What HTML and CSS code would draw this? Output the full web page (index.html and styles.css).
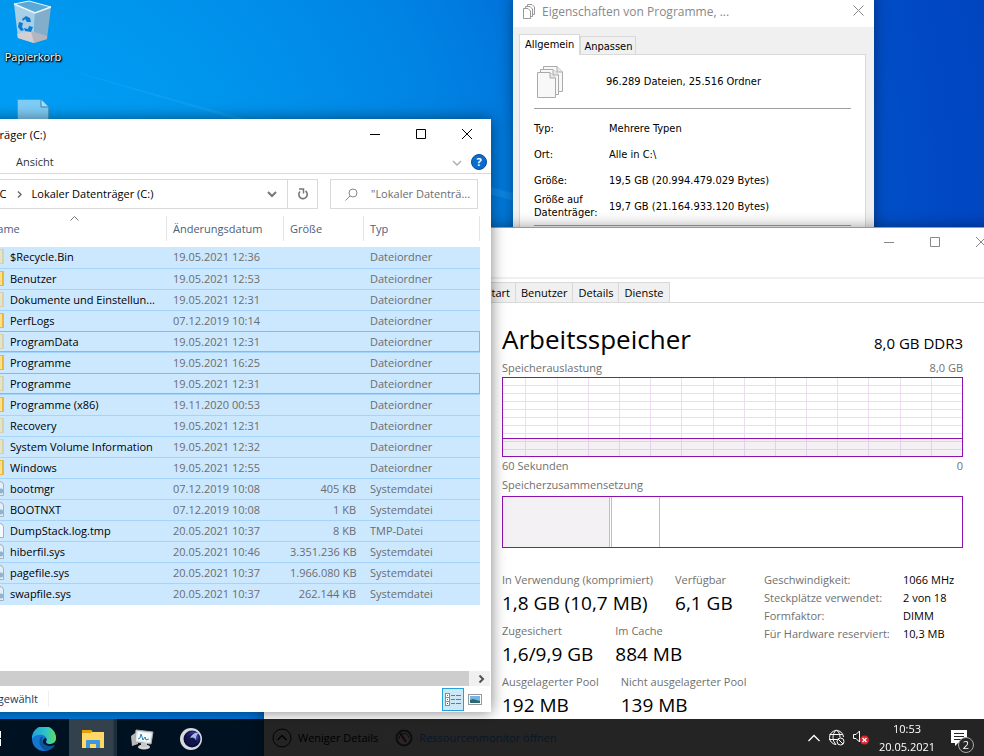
FILE: index.html
```html
<!DOCTYPE html>
<html lang="de">
<head>
  <meta charset="UTF-8" />
  <meta name="viewport" content="width=device-width, initial-scale=1.0" />
  <title>Desktop</title>
  <link rel="stylesheet" href="styles.css">
</head>
<body>

  <main class="desktop">
    <svg class="beam" viewBox="0 0 520 260" aria-hidden="true">
      <path d="M40 62 L520 195 L520 203 Z" fill="#3db8ff" opacity="0.2"/>
    </svg>

    <div class="desktop-icons">
      <a class="desktop-icon" href="#">
        <svg width="40" height="44" viewBox="0 0 40 44" aria-hidden="true">
          <path d="M1 4 L16 1 L38 7 L22 13 Z" fill="#5aa9d6" stroke="#e6f3fa" stroke-width="1"/>
          <path d="M1 4 L22 13 L21 43 L5 38 Z" fill="#a9cfe6"/>
          <path d="M22 13 L38 7 L34 39 L21 43 Z" fill="#83aecb"/>
          <path d="M4 34 L18 31 L21 43 L5 38 Z" fill="#d3cfd2"/>
          <path d="M18 31 L34 36 L34 39 L21 43 Z" fill="#b4b5be"/>
          <path d="M1 4 L22 13 L38 7" fill="none" stroke="#e6f3fa" stroke-width="1.4"/>
          <path d="M9 19 l4 -3 l4 2 l1 4 l-4 0 l-2 -3 l-2 2 z M6 22 l4 1 l-1 4 l2 3 l-3 1 l-3 -4 z M11 28 l4 1 l1 -3 l4 1 l-2 5 l-6 -1 z" fill="#0b7bd3"/>
        </svg>
        <span>Papierkorb</span>
      </a>
      <a class="desktop-icon" href="#" aria-label="Datei">
        <svg width="32" height="40" viewBox="0 0 32 40" aria-hidden="true">
          <path d="M0.500 0.500 H24 L31.500 8 V40 H0.500 Z" fill="#7fcdf7" stroke="#4a9fcc"/>
          <path d="M24 0.500 V8 H31.500" fill="#a9dffb" stroke="#2f87b8"/>
        </svg>
      </a>
    </div>

    <!-- Eigenschaften -->
    <section class="window props">
      <header class="props-title">
        <svg width="12" height="15" viewBox="0 0 12 15" fill="#fff" stroke="#999" aria-hidden="true">
          <path d="M4.500 0.500 H9 L11.500 3 V10.500 H4.500 Z"/>
          <path d="M2.500 2.500 H7 L9.500 5 V12.500 H2.500 Z"/>
          <path d="M0.500 4.500 H5 L7.500 7 V14.500 H0.500 Z"/>
        </svg>
        <h2>Eigenschaften von Programme, ...</h2>
        <button aria-label="Schließen">
          <svg width="11" height="11" viewBox="0 0 11 11" aria-hidden="true"><path d="M0.500 0.500 L10.500 10.500 M10.500 0.500 L0.500 10.500" stroke="#888"/></svg>
        </button>
      </header>
      <nav class="props-tabs">
        <button class="active">Allgemein</button>
        <button>Anpassen</button>
      </nav>
      <div class="props-page">
        <div class="props-summary">
          <svg width="28" height="34" viewBox="0 0 28 34" fill="#f8f8f8" stroke="#aaa" aria-hidden="true">
            <path d="M7.500 1.500 H21 L26.500 7 V26.500 H7.500 Z"/>
            <path d="M21 1.500 V7 H26.500" fill="#e8e8e8"/>
            <path d="M4.500 4.500 H17 L22.500 10 V29.500 H4.500 Z"/>
            <path d="M17 4.500 V10 H22.500" fill="#e8e8e8"/>
            <path d="M1.500 7.500 H14 L19.500 13 V32.500 H1.500 Z"/>
            <path d="M14 7.500 V13 H19.500" fill="#e8e8e8"/>
          </svg>
          <span>96.289 Dateien, 25.516 Ordner</span>
        </div>
        <dl class="props-list">
          <dt>Typ:</dt><dd>Mehrere Typen</dd>
          <dt>Ort:</dt><dd>Alle in C:\</dd>
          <dt>Größe:</dt><dd>19,5 GB (20.994.479.029 Bytes)</dd>
          <dt>Größe auf Datenträger:</dt><dd>19,7 GB (21.164.933.120 Bytes)</dd>
        </dl>
      </div>
    </section>

    <!-- Task-Manager -->
    <section class="window taskmgr">
      <header class="window-buttons">
        <button aria-label="Minimieren"><svg width="10" height="10" viewBox="0 0 10 10" aria-hidden="true"><path d="M0 5.500 H10" stroke="#888"/></svg></button>
        <button aria-label="Maximieren"><svg width="10" height="10" viewBox="0 0 10 10" aria-hidden="true"><path d="M0.500 0.500 H9.500 V9.500 H0.500 Z" fill="none" stroke="#888"/></svg></button>
        <button aria-label="Schließen"><svg width="10" height="10" viewBox="0 0 10 10" aria-hidden="true"><path d="M0 0 L10 10 M10 0 L0 10" stroke="#888"/></svg></button>
      </header>
      <nav class="tm-tabs">
        <button>Autostart</button>
        <button>Benutzer</button>
        <button>Details</button>
        <button>Dienste</button>
      </nav>
      <div class="tm-content">
        <div class="tm-heading">
          <h1>Arbeitsspeicher</h1>
          <span>8,0 GB DDR3</span>
        </div>
        <div class="tm-caption"><span>Speicherauslastung</span><span>8,0 GB</span></div>
        <svg class="tm-chart" viewBox="0 0 461 80" preserveAspectRatio="none" shape-rendering="crispEdges" role="img" aria-label="Speicherauslastung">
          <rect x="0" y="61" width="461" height="19" fill="#f3f1f4"/>
          <path d="M0 8.500 H461 M0 16.500 H461 M0 24.500 H461 M0 32.500 H461 M0 40.500 H461 M0 48.500 H461 M0 56.500 H461 M0 64.500 H461 M0 72.500 H461
                   M23.500 0 V80 M55.500 0 V80 M86.500 0 V80 M117.500 0 V80 M148.500 0 V80 M179.500 0 V80 M211.500 0 V80 M242.500 0 V80 M273.500 0 V80 M304.500 0 V80 M335.500 0 V80 M366.500 0 V80 M398.500 0 V80 M429.500 0 V80" stroke="#8b12ae" stroke-opacity="0.15" fill="none"/>
          <rect x="0" y="61" width="461" height="1" fill="#8b12ae"/>
          <rect x="0.500" y="0.500" width="460" height="79" fill="none" stroke="#8b12ae"/>
        </svg>
        <div class="tm-caption"><span>60 Sekunden</span><span>0</span></div>
        <div class="tm-caption">Speicherzusammensetzung</div>
        <div class="tm-composition">
          <div class="used"></div>
          <div class="modified"></div>
          <div class="standby"></div>
        </div>
        <div class="tm-stats">
          <div class="tm-numbers">
            <dl>
              <div><dt>In Verwendung (komprimiert)</dt><dd>1,8 GB (10,7 MB)</dd></div>
              <div><dt>Verfügbar</dt><dd>6,1 GB</dd></div>
            </dl>
            <dl>
              <div><dt>Zugesichert</dt><dd>1,6/9,9 GB</dd></div>
              <div><dt>Im Cache</dt><dd>884 MB</dd></div>
            </dl>
            <dl>
              <div><dt>Ausgelagerter Pool</dt><dd>192 MB</dd></div>
              <div><dt>Nicht ausgelagerter Pool</dt><dd>139 MB</dd></div>
            </dl>
          </div>
          <dl class="tm-hardware">
            <dt>Geschwindigkeit:</dt><dd>1066 MHz</dd>
            <dt>Steckplätze verwendet:</dt><dd>2 von 18</dd>
            <dt>Formfaktor:</dt><dd>DIMM</dd>
            <dt>Für Hardware reserviert:</dt><dd>10,3 MB</dd>
          </dl>
        </div>
      </div>
      <footer class="tm-footer">
        <button>
          <svg width="20" height="20" viewBox="0 0 20 20" fill="none" stroke="#111" aria-hidden="true"><circle cx="10" cy="10" r="9"/><path d="M5.500 12 L10 7.500 L14.500 12" stroke-width="1.500"/></svg>
          Weniger Details
        </button>
        <a href="#">
          <svg width="18" height="18" viewBox="0 0 18 18" aria-hidden="true"><circle cx="9" cy="9" r="7.500" fill="#fff" stroke="#555" stroke-width="2"/><path d="M5 4 L11 13" stroke="#f00" stroke-width="2"/><path d="M4 10 A5 5 0 0 1 14 9" fill="none" stroke="#444"/></svg>
          Ressourcenmonitor öffnen
        </a>
      </footer>
    </section>

    <!-- Explorer -->
    <section class="window explorer">
      <header class="ex-title">
        <h2>Datenträger (C:)</h2>
        <div class="window-buttons">
          <button aria-label="Minimieren"><svg width="10" height="10" viewBox="0 0 10 10" aria-hidden="true"><path d="M0 5.500 H10" stroke="#000"/></svg></button>
          <button aria-label="Maximieren"><svg width="10" height="10" viewBox="0 0 10 10" aria-hidden="true"><path d="M0.500 0.500 H9.500 V9.500 H0.500 Z" fill="none" stroke="#000"/></svg></button>
          <button aria-label="Schließen"><svg width="10" height="10" viewBox="0 0 10 10" aria-hidden="true"><path d="M0 0 L10 10 M10 0 L0 10" stroke="#000"/></svg></button>
        </div>
      </header>
      <div class="ex-ribbon">
        <button class="ribbon-tab">Ansicht</button>
        <button aria-label="Menüband erweitern"><svg width="10" height="6" viewBox="0 0 10 6" aria-hidden="true"><path d="M1 1 L5 5 L9 1" fill="none" stroke="#aaa" stroke-width="1.300"/></svg></button>
        <button class="help" aria-label="Hilfe">?</button>
      </div>
      <div class="ex-nav">
        <div class="address">
          <a href="#">PC</a>
          <svg width="5" height="7" viewBox="0 0 5 7" aria-hidden="true"><path d="M1 0.500 L4 3.500 L1 6.500" fill="none" stroke="#666" stroke-width="1.400"/></svg>
          <a href="#" class="current">Lokaler Datenträger (C:)</a>
          <button aria-label="Verlauf"><svg width="10" height="7" viewBox="0 0 10 7" aria-hidden="true"><path d="M1 1 L5 5 L9 1" fill="none" stroke="#777" stroke-width="2"/></svg></button>
          <button class="refresh" aria-label="Aktualisieren"><svg width="12" height="12" viewBox="0 0 12 12" aria-hidden="true"><path d="M8.500 3 A4.200 4.200 0 1 1 3 3.500" fill="none" stroke="#777" stroke-width="1.600"/><path d="M2 1 H6.500 V5.500" fill="none" stroke="#777" stroke-width="1.500"/></svg></button>
        </div>
        <label class="search">
          <svg width="13" height="13" viewBox="0 0 13 13" fill="none" stroke="#888" aria-hidden="true"><circle cx="8" cy="5" r="4"/><path d="M5 8 L0.500 12.500"/></svg>
          <input type="text" aria-label="Suchen" placeholder="&quot;Lokaler Datenträ...">
        </label>
      </div>
      <div class="ex-files">
        <table>
          <thead>
            <tr>
              <th class="name"><svg width="9" height="5" viewBox="0 0 9 5" aria-hidden="true"><path d="M0.500 4.500 L4.500 0.500 L8.500 4.500" fill="none" stroke="#777"/></svg>Name</th>
              <th class="date">Änderungsdatum</th>
              <th class="size">Größe</th>
              <th class="type">Typ</th>
            </tr>
          </thead>
          <tbody>
            <tr><td><i class="folder hidden"></i>$Recycle.Bin</td><td>19.05.2021 12:36</td><td></td><td>Dateiordner</td></tr>
            <tr><td><i class="folder"></i>Benutzer</td><td>19.05.2021 12:53</td><td></td><td>Dateiordner</td></tr>
            <tr><td><i class="folder hidden"></i>Dokumente und Einstellun...</td><td>19.05.2021 12:31</td><td></td><td>Dateiordner</td></tr>
            <tr><td><i class="folder"></i>PerfLogs</td><td>07.12.2019 10:14</td><td></td><td>Dateiordner</td></tr>
            <tr class="focus"><td><i class="folder hidden"></i>ProgramData</td><td>19.05.2021 12:31</td><td></td><td>Dateiordner</td></tr>
            <tr><td><i class="folder"></i>Programme</td><td>19.05.2021 16:25</td><td></td><td>Dateiordner</td></tr>
            <tr class="focus"><td><i class="folder hidden"></i>Programme</td><td>19.05.2021 12:31</td><td></td><td>Dateiordner</td></tr>
            <tr><td><i class="folder"></i>Programme (x86)</td><td>19.11.2020 00:53</td><td></td><td>Dateiordner</td></tr>
            <tr><td><i class="folder hidden"></i>Recovery</td><td>19.05.2021 12:31</td><td></td><td>Dateiordner</td></tr>
            <tr><td><i class="folder hidden"></i>System Volume Information</td><td>19.05.2021 12:32</td><td></td><td>Dateiordner</td></tr>
            <tr><td><i class="folder"></i>Windows</td><td>19.05.2021 12:55</td><td></td><td>Dateiordner</td></tr>
            <tr><td><i class="file sys"></i>bootmgr</td><td>07.12.2019 10:08</td><td>405 KB</td><td>Systemdatei</td></tr>
            <tr><td><i class="file sys"></i>BOOTNXT</td><td>07.12.2019 10:08</td><td>1 KB</td><td>Systemdatei</td></tr>
            <tr><td><i class="file"></i>DumpStack.log.tmp</td><td>20.05.2021 10:37</td><td>8 KB</td><td>TMP-Datei</td></tr>
            <tr><td><i class="file sys"></i>hiberfil.sys</td><td>20.05.2021 10:46</td><td>3.351.236 KB</td><td>Systemdatei</td></tr>
            <tr><td><i class="file sys"></i>pagefile.sys</td><td>20.05.2021 10:37</td><td>1.966.080 KB</td><td>Systemdatei</td></tr>
            <tr><td><i class="file sys"></i>swapfile.sys</td><td>20.05.2021 10:37</td><td>262.144 KB</td><td>Systemdatei</td></tr>
          </tbody>
        </table>
      </div>
      <div class="ex-scroll">
        <div class="thumb"></div>
        <button aria-label="Nach rechts"><svg width="7" height="8" viewBox="0 0 7 8" aria-hidden="true"><path d="M1.500 0.500 L5 4 L1.500 7.500" fill="none" stroke="#505050" stroke-width="2"/></svg></button>
      </div>
      <footer class="ex-status">
        <span>ausgewählt</span>
        <button class="view active" aria-label="Details">
          <svg width="16" height="13" viewBox="0 0 16 13" shape-rendering="crispEdges" aria-hidden="true">
            <path d="M0.500 0.500 H4.500 V12.500 H0.500 Z M0 4.500 H5 M0 8.500 H5" fill="#fff" stroke="#8c8c8c"/>
            <path d="M6 2.500 H10 M11 2.500 H16 M6 6.500 H10 M11 6.500 H16 M6 10.500 H10 M11 10.500 H16" stroke="#777"/>
            <path d="M2 2.500 H3" stroke="#2670d0"/><path d="M2 6.500 H3" stroke="#2670d0"/><path d="M2 10.500 H3" stroke="#e01010"/>
          </svg>
        </button>
        <button class="view" aria-label="Große Symbole">
          <svg width="14" height="11" viewBox="0 0 14 11" aria-hidden="true"><rect x="0.500" y="0.500" width="13" height="10" fill="#fff" stroke="#999"/><rect x="2" y="2" width="10" height="7" fill="#78b4ec"/><path d="M2 6 L5 5 L12 7 V9 H2 Z" fill="#2b6a72"/></svg>
        </button>
      </footer>
    </section>
  </main>

  <nav class="taskbar">
    <button class="start" aria-label="Start"></button>
    <button class="app" aria-label="Microsoft Edge">
      <svg width="24" height="24" viewBox="0 0 24 24" aria-hidden="true">
        <defs>
          <linearGradient id="edgeTop" x1="0" x2="1"><stop offset="0" stop-color="#1ba0e0"/><stop offset="0.600" stop-color="#2fc6c4"/><stop offset="1" stop-color="#62dc5c"/></linearGradient>
        </defs>
        <circle cx="12" cy="12" r="12" fill="#1477cf"/>
        <path d="M0 11 A12 12 0 0 1 24 11 C24 15.500 21 17 18 17 C15 17 14 16 14 15 C15.500 13.500 15 9 10.500 8 C6 7 1.500 9 0 12 Z" fill="url(#edgeTop)"/>
        <path d="M9 10 C6 13 7 20 13 23.500 C18 24 22 20.500 23 17.500 C19 20 12 19 10.500 15 C10 13 10 11.500 11 10 Z" fill="#0d549f"/>
        <path d="M14 11 C15 13 14 14.500 14 15 C14 16.500 16 17.500 19 17 C22 16.500 24 14 24 13 L25 18 L22.500 18 C18 20 12 18.500 11 15.500 C10.500 13 12 11 14 11 Z" fill="#001621"/>
      </svg>
    </button>
    <button class="app active" aria-label="Explorer">
      <svg width="22" height="18" viewBox="0 0 22 18" aria-hidden="true">
        <path d="M0 0 H9 L10.500 2 H22 V18 H0 Z" fill="#ffd866"/>
        <path d="M0 0 H9 L10 1.500 L9 3 H0 Z" fill="#e3a008"/>
        <path d="M4 18 V11 Q4 10 5 10 H17 Q18 10 18 11 V18 H14 V14 H8 V18 Z" fill="#3f97db"/>
      </svg>
    </button>
    <button class="app" aria-label="Task-Manager">
      <svg width="24" height="21" viewBox="0 0 24 21" aria-hidden="true">
        <path d="M1 7 L8 2 V15 L2 17 Z" fill="#b9b9b9"/>
        <path d="M6 1 L23 3 L21 15 L5 13 Z" fill="#e4e4e2" stroke="#a8a8a8"/>
        <path d="M8 3 L21 4.500 L19.500 13 L7 11.500 Z" fill="#f6fbfd"/>
        <path d="M8 10 L10 9 L11 5 L13 11 L15 8 L16 11 L19 10" fill="none" stroke="#2584c4"/>
        <ellipse cx="14" cy="18" rx="6" ry="2.500" fill="#d8d8d8"/>
        <path d="M11 14 H17 V18 H11 Z" fill="#c8c8c8"/>
        <rect x="1" y="8" width="1" height="2" fill="#4ad04a"/>
      </svg>
    </button>
    <button class="app" aria-label="Cinema 4D">
      <svg width="22" height="22" viewBox="0 0 22 22" aria-hidden="true">
        <defs><radialGradient id="ball" cx="0.600" cy="0.350"><stop offset="0" stop-color="#7a8be0"/><stop offset="0.600" stop-color="#1c2472"/><stop offset="1" stop-color="#0a0d38"/></radialGradient></defs>
        <circle cx="11" cy="11" r="11" fill="#d9d9df"/>
        <circle cx="12" cy="11" r="8.500" fill="url(#ball)"/>
        <path d="M6 13 C6 8 12 4 18 5 C15 7 15 10 16 12 C17 15 15 17 11 17 C8 17 6 15 6 13 Z" fill="#11164a"/>
        <path d="M10 10 C12 6 15 4 19 5 C16 7 15.500 9 16 12 C14 9 12 9 10 10 Z" fill="#a9b4f0"/>
      </svg>
    </button>
    <div class="tray">
      <button aria-label="Ausgeblendete Symbole"><svg width="12" height="8" viewBox="0 0 12 8" aria-hidden="true"><path d="M0.500 7 L6 1.500 L11.500 7" fill="none" stroke="#fff" stroke-width="1.300"/></svg></button>
      <button aria-label="Netzwerk">
        <svg width="17" height="17" viewBox="0 0 17 17" fill="none" stroke="#fff" aria-hidden="true">
          <path d="M8 15.500 A7 7 0 1 1 15.500 8 M1.500 5.500 H14.500 M1 10.500 H9 M8 1 C4 5 4 12 8 15.500 M8.500 1 C11 3 12 5 12 8.500"/>
          <circle cx="12.500" cy="12.500" r="3.500" fill="#262626"/><path d="M10 10 L15 15"/>
        </svg>
      </button>
      <button aria-label="Lautstärke">
        <svg width="16" height="15" viewBox="0 0 16 15" aria-hidden="true">
          <path d="M0.500 4.500 H3 L6.500 1 V12 L3 8.500 H0.500 Z" fill="none" stroke="#fff"/>
          <circle cx="11.500" cy="10" r="4.500" fill="#e3212b"/><path d="M9.500 8 L13.500 12 M13.500 8 L9.500 12" stroke="#fff" stroke-width="1.400"/>
        </svg>
      </button>
      <button class="clock"><span>10:53</span><span>20.05.2021</span></button>
      <button class="notifications" aria-label="Benachrichtigungen">
        <svg width="16" height="16" viewBox="0 0 16 16" aria-hidden="true"><path d="M0 0 H16 V13 H7 L4 16 V13 H0 Z" fill="#fff"/><path d="M3 3.500 H13 M3 6.500 H13 M3 9.500 H10" stroke="#262626"/></svg>
        <span class="badge">2</span>
      </button>
    </div>
  </nav>

</body>
</html>
```

FILE: styles.css
```css
* {
  box-sizing: border-box;
}

body {
  margin: 0;
  height: 100vh;
  overflow: hidden;
  font-family: "Open Sans", "Noto Sans", sans-serif;
  font-size: 11px;
  line-height: 16px;
  color: #000;
}

h1,
h2,
dl,
dd {
  margin: 0;
  font-weight: normal;
}

button {
  padding: 0;
  border: none;
  background: none;
  font: inherit;
  color: inherit;
  cursor: pointer;
}

a {
  color: inherit;
  text-decoration: none;
}

svg {
  flex: none;
}

.desktop {
  position: relative;
  height: 100%;
  overflow: hidden;
  background: radial-gradient(circle at 0 30%, #00a4fa 0, #0096ee 22%, #0084e4 40%, #0070d8 52%, #0048c4 85%, #003aae 110%);
}

.beam {
  position: absolute;
  top: 0;
  left: 0;
  width: 520px;
}

.desktop-icons {
  position: absolute;
  top: 0;
  left: 0;
  width: 66px;
  display: flex;
  flex-direction: column;
  gap: 34px;
}

.desktop-icon {
  display: flex;
  flex-direction: column;
  align-items: center;
  gap: 5px;
  color: #fff;
  text-shadow: 1px 1px 2px #000, 0 0 2px #000, 1px 1px 1px #000;
}

.window {
  position: absolute;
  background: #fff;
  box-shadow: 0 0 14px rgba(0, 0, 0, 0.4);
}

.window-buttons {
  display: flex;
  justify-content: flex-end;
}

.window-buttons button {
  width: 46px;
  height: 30px;
  display: flex;
  align-items: center;
  justify-content: center;
}

/* Properties dialog */
.props {
  top: -4px;
  left: 513px;
  width: 361px;
  height: 480px;
  padding-bottom: 40px;
  display: flex;
  flex-direction: column;
  background: #f0f0f0;
  font-family: "DejaVu Sans Condensed", "Noto Sans", sans-serif;
  line-height: 13px;
}

.props-title {
  height: 31px;
  padding: 0 10px;
  display: flex;
  align-items: center;
  gap: 7px;
  background: #fff;
  color: #888;
  font-family: "Open Sans", sans-serif;
}

.props-title h2 {
  flex: 1;
  font-size: 12px;
}

.props-tabs {
  padding: 7px 6px 0;
  display: flex;
  align-items: flex-end;
}

.props-tabs button {
  height: 18px;
  padding: 2px 3px 0;
  border: 1px solid #d9d9d9;
  border-bottom: none;
}

.props-tabs .active {
  height: 21px;
  padding: 0 5px 1px;
  margin-bottom: -1px;
  z-index: 1;
  background: #fff;
}

.props-page {
  flex: 1;
  margin: 0 8px 0 6px;
  padding: 0 14px;
  border: 1px solid #d9d9d9;
  background: #fff;
}

.props-summary {
  height: 54px;
  padding-left: 2px;
  display: flex;
  align-items: center;
  gap: 42px;
  border-bottom: 1px solid #a0a0a0;
}

.props-list {
  padding: 6px 0;
  display: grid;
  grid-template-columns: 75px 1fr;
  grid-auto-rows: 26px;
  align-items: center;
  border-bottom: 1px solid #a0a0a0;
}

/* Task manager */
.taskmgr {
  top: 227px;
  left: 264px;
  width: 740px;
  height: 541px;
  border-top: 1px solid #999;
  display: flex;
  flex-direction: column;
}

.taskmgr > .window-buttons {
  flex: none;
  height: 51px;
  border-bottom: 2px solid #f0f0f0;
}

.taskmgr > .window-buttons button {
  height: 28px;
}

.tm-tabs {
  flex: none;
  height: 24px;
  padding: 3px 0 0 193px;
  display: flex;
  border-bottom: 1px solid #d9d9d9;
}

.tm-tabs button {
  padding: 0 5px;
  border: 1px solid #d9d9d9;
  border-left: none;
  border-bottom: none;
  background: #f0f0f0;
}

.tm-content {
  flex: 1;
  min-height: 0;
  padding: 16px 41px 0 238px;
  color: #707070;
}

.tm-heading {
  height: 40px;
  display: flex;
  justify-content: space-between;
  align-items: baseline;
  color: #000;
  font-size: 15px;
  line-height: 40px;
}

.tm-heading h1 {
  font-size: 26px;
}

.tm-caption {
  display: flex;
  justify-content: space-between;
  line-height: 18px;
}

.tm-caption + .tm-caption {
  padding-bottom: 1px;
  line-height: 20px;
}

.tm-chart {
  display: block;
  width: 100%;
  height: 80px;
}

.tm-composition {
  height: 52px;
  display: flex;
  border: 1px solid #8b12ae;
}

.tm-composition div {
  border-right: 1px solid #cfb2da;
}

.used {
  width: 107px;
  background: #f3f1f4;
}

.modified {
  width: 2px;
}

.standby {
  width: 48px;
}

.tm-stats {
  padding-top: 23px;
  display: grid;
  grid-template-columns: 262px 1fr;
  white-space: nowrap;
}

.tm-numbers dl {
  height: 51px;
  display: flex;
  gap: 22px;
}

.tm-numbers dt {
  line-height: 18px;
}

.tm-numbers dd {
  color: #000;
  font-size: 19px;
  line-height: 28px;
}

.tm-hardware {
  display: grid;
  grid-template-columns: 139px 1fr;
  grid-auto-rows: 18px;
  line-height: 18px;
}

.tm-hardware dd {
  color: #000;
}

.tm-footer {
  flex: none;
  position: relative;
  height: 49px;
  padding: 0 8px 12px;
  display: flex;
  align-items: center;
  background: #f0f0f0;
}

.tm-footer button,
.tm-footer a {
  display: flex;
  align-items: center;
  gap: 6px;
}

.tm-footer a {
  margin-left: 8px;
  padding-left: 8px;
  border-left: 1px solid #fff;
  color: #30a0ff;
}

/* Explorer */
.explorer {
  top: 119px;
  left: -40px;
  width: 531px;
  box-shadow: 0 0 14px rgba(0, 0, 0, 0.5);
}

.ex-title {
  height: 30px;
  padding-right: 1px;
  display: flex;
  justify-content: space-between;
}

.ex-title h2 {
  width: 86px;
  display: flex;
  justify-content: flex-end;
  font-size: 11px;
  line-height: 32px;
  white-space: nowrap;
}

.ex-ribbon {
  height: 25px;
  padding: 1px 4px 0 56px;
  display: flex;
  align-items: center;
  gap: 9px;
  border-bottom: 1px solid #dadbdc;
  color: #333;
}

.ribbon-tab {
  margin-right: auto;
}

.help {
  width: 16px;
  height: 16px;
  border-radius: 50%;
  border: 1px solid #054f96;
  background: #0a6cce;
  color: #fff;
  font-weight: bold;
  line-height: 14px;
}

.ex-nav {
  padding: 5px 13px 0 0;
  display: flex;
  gap: 12px;
}

.address {
  flex: 1;
  height: 30px;
  padding-left: 32px;
  display: flex;
  align-items: center;
  gap: 10px;
  border: 1px solid #d9d9d9;
}

.current {
  flex: 1;
}

.address .refresh {
  width: 30px;
  height: 100%;
  padding-top: 3px;
  border-left: 1px solid #d9d9d9;
}

.search {
  width: 148px;
  height: 30px;
  padding: 0 6px 0 14px;
  display: flex;
  align-items: center;
  gap: 13px;
  border: 1px solid #d9d9d9;
}

.search input {
  flex: 1;
  min-width: 0;
  padding: 0;
  border: none;
  outline: none;
  background: none;
  font: inherit;
}

.search input::placeholder {
  color: #6d6d6d;
}

.ex-files {
  height: 462px;
}

.ex-files table {
  width: 520px;
  table-layout: fixed;
  border-collapse: collapse;
}

.ex-files th {
  position: relative;
  height: 38px;
  padding: 2px 0 0 6px;
  background: linear-gradient(#e5e5e5, #e5e5e5) right 7px / 1px 25px no-repeat;
  color: #4c607a;
  font-weight: normal;
  text-align: left;
}

.ex-files .name {
  width: 207px;
  padding-left: 29px;
}

.name svg {
  position: absolute;
  top: 7px;
  left: 110px;
}

.ex-files .date {
  width: 117px;
}

.ex-files .size {
  width: 80px;
}

.ex-files td {
  height: 21px;
  padding: 1px 0 1px 6px;
  background: #cce8ff;
  border-bottom: 1px solid #a4d4fb;
  color: #6d6d6d;
  line-height: 16px;
  white-space: nowrap;
}

.ex-files td:first-child {
  padding-left: 28px;
  color: #000;
}

.ex-files td:nth-child(3) {
  padding-right: 8px;
  text-align: right;
}

.ex-files tr:last-child td {
  border-bottom-color: #cce8ff;
}

.focus {
  outline: 1px solid #79bdf5;
  outline-offset: -1px;
}

.folder,
.file {
  display: inline-block;
  width: 16px;
  height: 15px;
  margin-right: 6px;
  vertical-align: top;
}

.folder {
  border: 1px solid #eab93c;
  border-right-width: 2px;
  background: #ffe08a;
}

.folder.hidden {
  opacity: 0.45;
}

.file {
  border: 1px solid #a5b0b8;
  border-top-right-radius: 4px;
  background: #f4f9fd;
}

.file.sys {
  background: radial-gradient(circle at 12px 9px, #8fb4cf 0, #8fb4cf 2px, #e4f0f9 3px);
}

.ex-scroll {
  height: 15px;
  margin-right: 1px;
  display: flex;
  background: #f0f0f0;
}

.thumb {
  flex: 1;
  background: #cdcdcd;
}

.ex-scroll button {
  width: 21px;
  padding-left: 4px;
  line-height: 8px;
}

.ex-status {
  height: 26px;
  padding-right: 5px;
  display: flex;
  align-items: center;
  color: #1e395b;
}

.ex-status span {
  width: 89px;
  margin-right: auto;
  padding-right: 10px;
  border-right: 1px solid #eee;
  display: flex;
  justify-content: flex-end;
}

.view {
  width: 22px;
  height: 23px;
  display: flex;
  align-items: center;
  justify-content: center;
}

.view.active {
  border: 1px solid #26a0da;
  background: #cce8f6;
}

/* Taskbar */
.taskbar {
  position: fixed;
  left: 0;
  right: 0;
  bottom: 0;
  height: 37px;
  display: flex;
  gap: 1px;
  background: rgba(0, 0, 0, 0.85);
  color: #fff;
}

.start {
  width: 19px;
  background: linear-gradient(#fff, #fff) 0 12px / 1px 7px no-repeat, linear-gradient(#fff, #fff) 0 20px / 1px 7px no-repeat;
}

.app {
  width: 48px;
  display: flex;
  align-items: center;
  justify-content: center;
  padding-top: 3px;
}

.app.active {
  background: linear-gradient(to right, rgba(255, 255, 255, 0.2) 44px, rgba(255, 255, 255, 0.12) 45px);
}

.tray {
  margin-left: auto;
  padding-right: 9px;
  display: flex;
  align-items: center;
  gap: 8px;
}

.tray button {
  display: flex;
}

.tray .clock {
  width: 60px;
  height: 100%;
  flex-direction: column;
  align-items: center;
  justify-content: center;
  line-height: 18px;
}

.tray .notifications {
  position: relative;
  width: 24px;
  margin-left: 6px;
}

.badge {
  position: absolute;
  top: 7px;
  left: 7px;
  width: 16px;
  height: 16px;
  border: 1px solid #aaa;
  border-radius: 50%;
  background: #262626;
  line-height: 14px;
  text-align: center;
}
```
